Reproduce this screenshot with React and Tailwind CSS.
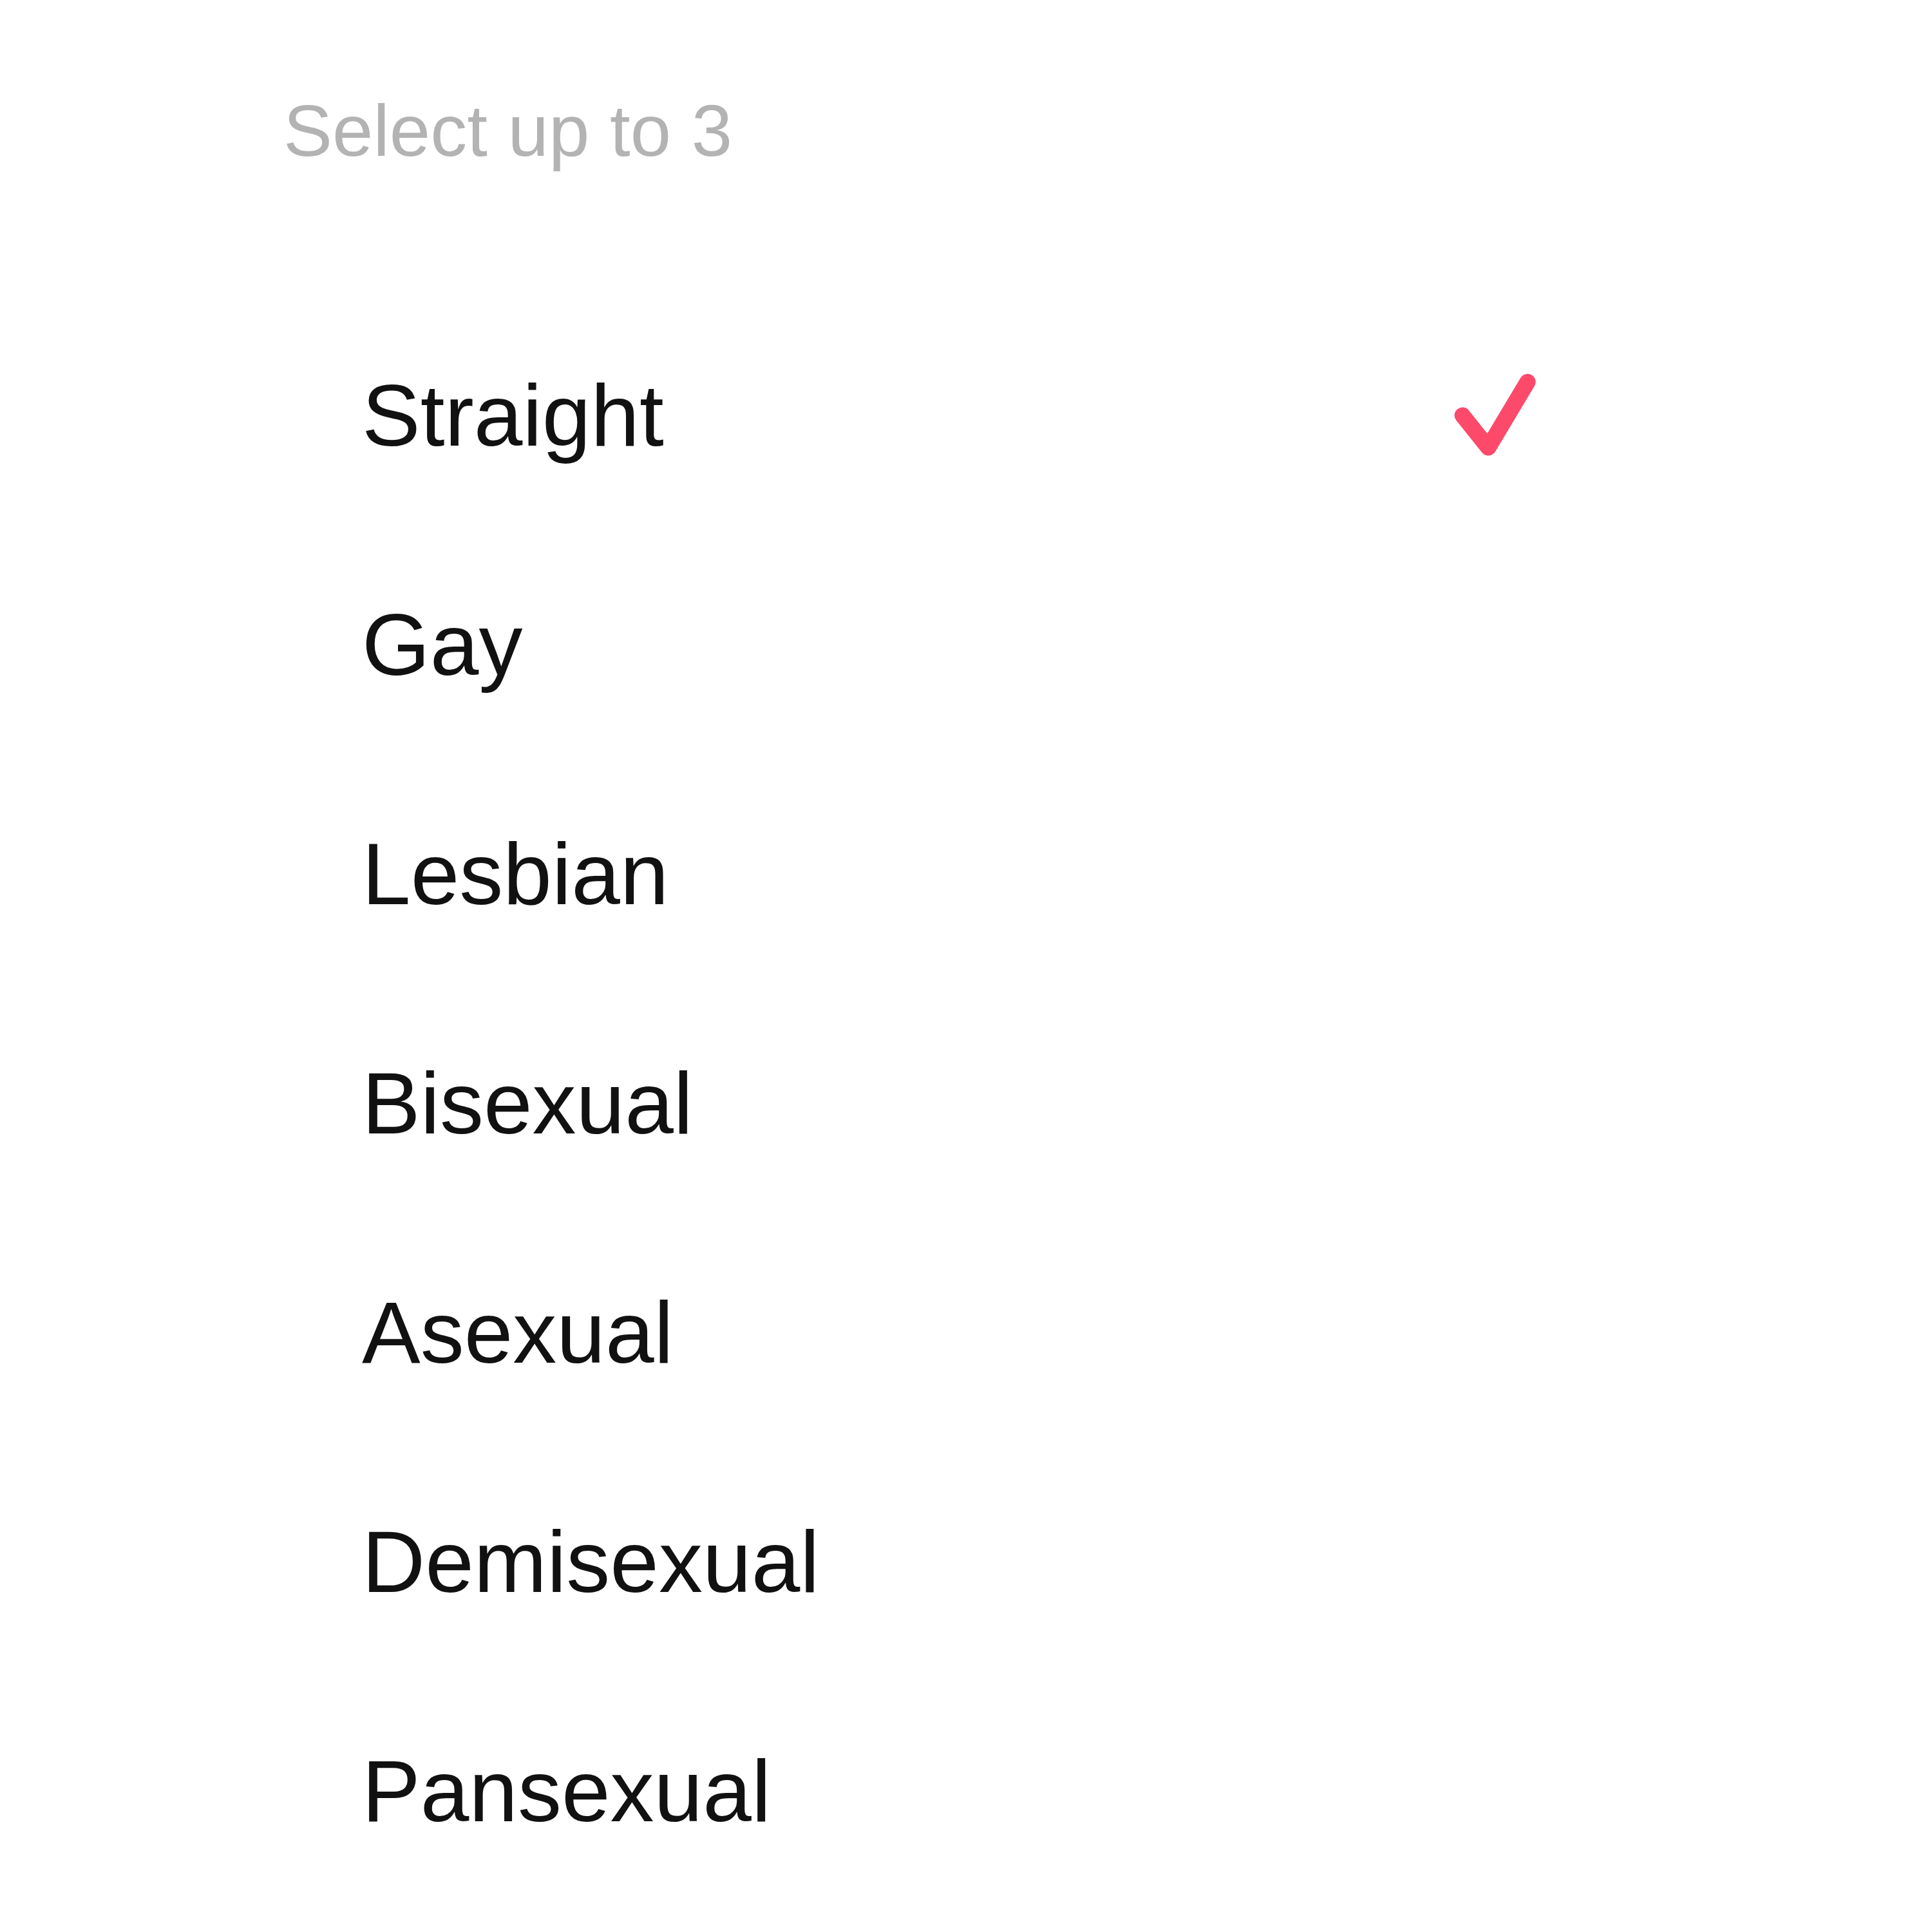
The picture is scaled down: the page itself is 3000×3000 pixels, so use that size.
import React, { useState } from "react";

const OPTIONS = [
  "Straight",
  "Gay",
  "Lesbian",
  "Bisexual",
  "Asexual",
  "Demisexual",
  "Pansexual",
];

function CheckIcon() {
  return (
    <svg width="140" height="140" viewBox="0 0 140 140" fill="none">
      <path
        d="M17 70 L57 120 L118 18"
        stroke="#fd4a6b"
        strokeWidth="25"
        strokeLinecap="round"
        strokeLinejoin="round"
      />
    </svg>
  );
}

function OptionRow({ label, selected, onClick }) {
  return (
    <div
      onClick={onClick}
      className="flex items-center h-[356px] pl-[562px] pr-[606px] cursor-pointer"
    >
      <span className="flex-1 text-[136px] leading-[356px] text-[#111111]">{label}</span>
      {selected && <CheckIcon />}
    </div>
  );
}

export default function App() {
  const [selected, setSelected] = useState(["Straight"]);

  const toggle = (label) => {
    setSelected((prev) => {
      if (prev.includes(label)) return prev.filter((l) => l !== label);
      if (prev.length >= 3) return prev;
      return [...prev, label];
    });
  };

  return (
    <div className="w-[3000px] h-[3000px] bg-white font-['Liberation_Sans',Arial,sans-serif]">
      <div className="pt-[146px] pl-[440px] text-[114px] leading-[114px] text-[#b3b3b3]">
        Select up to 3
      </div>
      <div className="mt-[207px]">
        {OPTIONS.map((opt) => (
          <OptionRow
            key={opt}
            label={opt}
            selected={selected.includes(opt)}
            onClick={() => toggle(opt)}
          />
        ))}
      </div>
    </div>
  );
}
